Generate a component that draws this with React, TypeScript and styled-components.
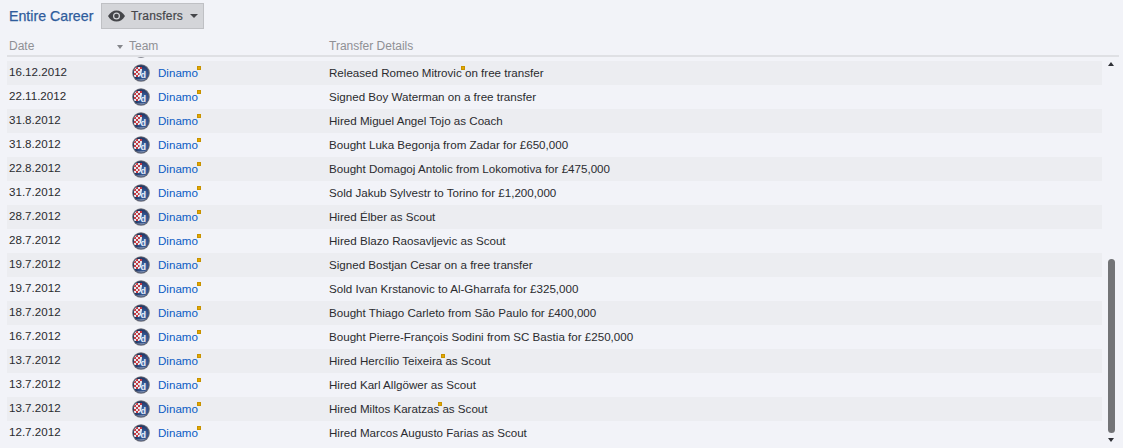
import React from "react";
import styled, { createGlobalStyle } from "styled-components";

const Global = createGlobalStyle`
  html, body { margin: 0; padding: 0; background: #f2f3f8; }
  body { font-family: "Liberation Sans", Arial, sans-serif; }
`;

const Page = styled.div`
  width: 1123px;
  height: 448px;
  overflow: hidden;
  display: flex;
  flex-direction: column;
  background: #f2f3f8;
  color: #2e2f33;
`;

const Toolbar = styled.div`
  height: 26px;
  padding: 3px 0 0 9px;
  display: flex;
  align-items: center;
`;

const Title = styled.div`
  width: 92px;
  font-size: 14.2px;
  color: #2f5c9c;
  -webkit-text-stroke: 0.25px #2f5c9c;
`;

const ViewButton = styled.div`
  box-sizing: border-box;
  width: 103px;
  height: 26px;
  padding-left: 6px;
  display: flex;
  align-items: center;
  background: #d4d5d9;
  border: 1px solid #bfc0c4;
  font-size: 12px;
  letter-spacing: 0.2px;
  color: #45464a;
  -webkit-text-stroke: 0.2px #45464a;
`;

const ButtonLabel = styled.span`
  margin-left: 6px;
`;

const ButtonCaret = styled.span`
  margin-left: 7px;
  width: 0;
  height: 0;
  border-left: 4px solid transparent;
  border-right: 4px solid transparent;
  border-top: 4px solid #45464a;
`;

const HeaderRow = styled.div`
  margin: 8px 4px 0 7px;
  height: 17px;
  padding-bottom: 1px;
  display: grid;
  grid-template-columns: 122px 200px 1fr;
  align-items: center;
  border-bottom: 2px solid #dfe0e4;
  font-size: 12px;
  color: #8f9095;
`;

const HeaderCell = styled.div<{ $inset?: boolean }>`
  padding-left: ${(p) => (p.$inset ? "2px" : "0")};
  position: relative;
`;

const SortCaret = styled.span`
  position: absolute;
  left: -12px;
  top: 6px;
  width: 0;
  height: 0;
  border-left: 3px solid transparent;
  border-right: 3px solid transparent;
  border-top: 4px solid #85868b;
`;

const Body = styled.div`
  flex: 1;
  min-height: 0;
  display: flex;
`;

const List = styled.div`
  width: 1095px;
  margin-left: 7px;
  overflow: hidden;
`;

const Row = styled.div<{ $stripe: boolean; $clipped?: boolean }>`
  height: 24px;
  display: grid;
  grid-template-columns: 125px 197px 1fr;
  align-items: center;
  font-size: 11.6px;
  color: #2a2b2f;
  background: ${(p) => (p.$stripe ? "#ecedf1" : "transparent")};
  margin-top: ${(p) => (p.$clipped ? "-20px" : "0")};
`;

const DateCell = styled.div`
  padding: 0 0 4px 2px;
`;

const TeamCell = styled.div`
  display: flex;
  align-items: center;
`;

const TeamName = styled.span`
  margin: 0 0 2px 8px;
  position: relative;
  color: #0a5cc4;
`;

const DetailsCell = styled.div`
  padding-bottom: 2px;
`;

const Note = styled.span`
  position: absolute;
  left: calc(100% - 1px);
  top: 0;
  width: 4px;
  height: 4px;
  background: #e3a800;
  border: 0.5px solid #c79200;
  box-sizing: border-box;
`;

const InlineNoteAnchor = styled.span`
  position: relative;
`;

const Scrollbar = styled.div`
  width: 21px;
  padding: 5px 0 0 6px;
  box-sizing: border-box;
  display: flex;
  flex-direction: column;
`;

const ArrowUp = styled.div`
  width: 0;
  height: 0;
  border-left: 3.5px solid transparent;
  border-right: 3.5px solid transparent;
  border-bottom: 4px solid #2f3036;
`;

const Thumb = styled.div`
  width: 7px;
  height: 174px;
  margin-top: 193px;
  border-radius: 4px;
  background: #737477;
`;

const ArrowDown = styled.div`
  width: 0;
  height: 0;
  margin-top: 5px;
  border-left: 3.5px solid transparent;
  border-right: 3.5px solid transparent;
  border-top: 4px solid #2f3036;
`;

const Eye = () => (
  <svg width="17" height="12" viewBox="0 0 17 12">
    <path d="M0 6C2.200 2.400 5 .4 8.500 .4S14.800 2.400 17 6c-2.200 3.600-5 5.600-8.500 5.600S2.200 9.600 0 6z" fill="#45464a" />
    <circle cx="8.500" cy="6" r="3.500" fill="#d4d5d9" />
    <circle cx="8.500" cy="6" r="2.300" fill="#45464a" />
  </svg>
);

const Crest = ({ letter = true }: { letter?: boolean }) => (
  <svg width="18" height="18" viewBox="0 0 18 18">
    <defs>
      <clipPath id="crest-clip">
        <circle cx="9" cy="9" r="7.600" />
      </clipPath>
      <radialGradient id="crest-blue" cx="0.65" cy="0.6" r="0.65">
        <stop offset="0" stopColor="#4470b4" />
        <stop offset="1" stopColor="#1b2c56" />
      </radialGradient>
    </defs>
    <circle cx="9" cy="9" r="8.800" fill="#6a6c76" />
    <circle cx="9" cy="9" r="7.800" fill="url(#crest-blue)" />
    <g clipPath="url(#crest-clip)">
      <path d="M2 3h8v3l-1 5-2 2H2z" fill="#e6e8ee" />
      <path d="M4 3h2v2H4zM8 3h2v2H8zM2 5h2v2H2zM6 5h2v2H6zM4 7h2v2H4zM2 9h2v2H2zM6 9h1.500v2H6zM4 11h2v2H4z" fill="#c43840" />
      <path d="M1 14c3 1.500 6 2 14 .5V18H1z" fill="#cfd3de" opacity="0.55" />
    </g>
    {letter && (
      <text x="11.300" y="13.500" fontFamily="Liberation Sans, sans-serif" fontSize="9" fontWeight="700" textAnchor="middle" fill="#e9edf6">
        d
      </text>
    )}
  </svg>
);

type Item = { date: string; text: string; noteAfter?: string };

const items: Item[] = [
  { date: "16.12.2012", text: "Released Romeo Mitrovic on free transfer", noteAfter: "Released Romeo Mitrovic" },
  { date: "22.11.2012", text: "Signed Boy Waterman on a free transfer" },
  { date: "31.8.2012", text: "Hired Miguel Angel Tojo as Coach" },
  { date: "31.8.2012", text: "Bought Luka Begonja from Zadar for £650,000" },
  { date: "22.8.2012", text: "Bought Domagoj Antolic from Lokomotiva for £475,000" },
  { date: "31.7.2012", text: "Sold Jakub Sylvestr to Torino for £1,200,000" },
  { date: "28.7.2012", text: "Hired Élber as Scout" },
  { date: "28.7.2012", text: "Hired Blazo Raosavljevic as Scout" },
  { date: "19.7.2012", text: "Signed Bostjan Cesar on a free transfer" },
  { date: "19.7.2012", text: "Sold Ivan Krstanovic to Al-Gharrafa for £325,000" },
  { date: "18.7.2012", text: "Bought Thiago Carleto from São Paulo for £400,000" },
  { date: "16.7.2012", text: "Bought Pierre-François Sodini from SC Bastia for £250,000" },
  { date: "13.7.2012", text: "Hired Hercílio Teixeira as Scout", noteAfter: "Hired Hercílio Teixeira" },
  { date: "13.7.2012", text: "Hired Karl Allgöwer as Scout" },
  { date: "13.7.2012", text: "Hired Miltos Karatzas as Scout", noteAfter: "Hired Miltos Karatzas" },
  { date: "12.7.2012", text: "Hired Marcos Augusto Farias as Scout" },
];

const Details = ({ item }: { item: Item }) => {
  if (!item.noteAfter) return <DetailsCell>{item.text}</DetailsCell>;
  return (
    <DetailsCell>
      <InlineNoteAnchor>
        {item.noteAfter}
        <Note />
      </InlineNoteAnchor>
      {item.text.slice(item.noteAfter.length)}
    </DetailsCell>
  );
};

export default function App() {
  return (
    <Page>
      <Global />
      <Toolbar>
        <Title>Entire Career</Title>
        <ViewButton>
          <Eye />
          <ButtonLabel>Transfers</ButtonLabel>
          <ButtonCaret />
        </ViewButton>
      </Toolbar>
      <HeaderRow>
        <HeaderCell $inset>Date</HeaderCell>
        <HeaderCell>
          <SortCaret />
          Team
        </HeaderCell>
        <HeaderCell>Transfer Details</HeaderCell>
      </HeaderRow>
      <Body>
        <List>
          <Row $stripe={false} $clipped>
            <div />
            <TeamCell>
              <Crest letter={false} />
            </TeamCell>
            <div />
          </Row>
          {items.map((item, i) => (
            <Row key={i} $stripe={i % 2 === 0}>
              <DateCell>{item.date}</DateCell>
              <TeamCell>
                <Crest />
                <TeamName>
                  Dinamo
                  <Note />
                </TeamName>
              </TeamCell>
              <Details item={item} />
            </Row>
          ))}
        </List>
        <Scrollbar>
          <ArrowUp />
          <Thumb />
          <ArrowDown />
        </Scrollbar>
      </Body>
    </Page>
  );
}
